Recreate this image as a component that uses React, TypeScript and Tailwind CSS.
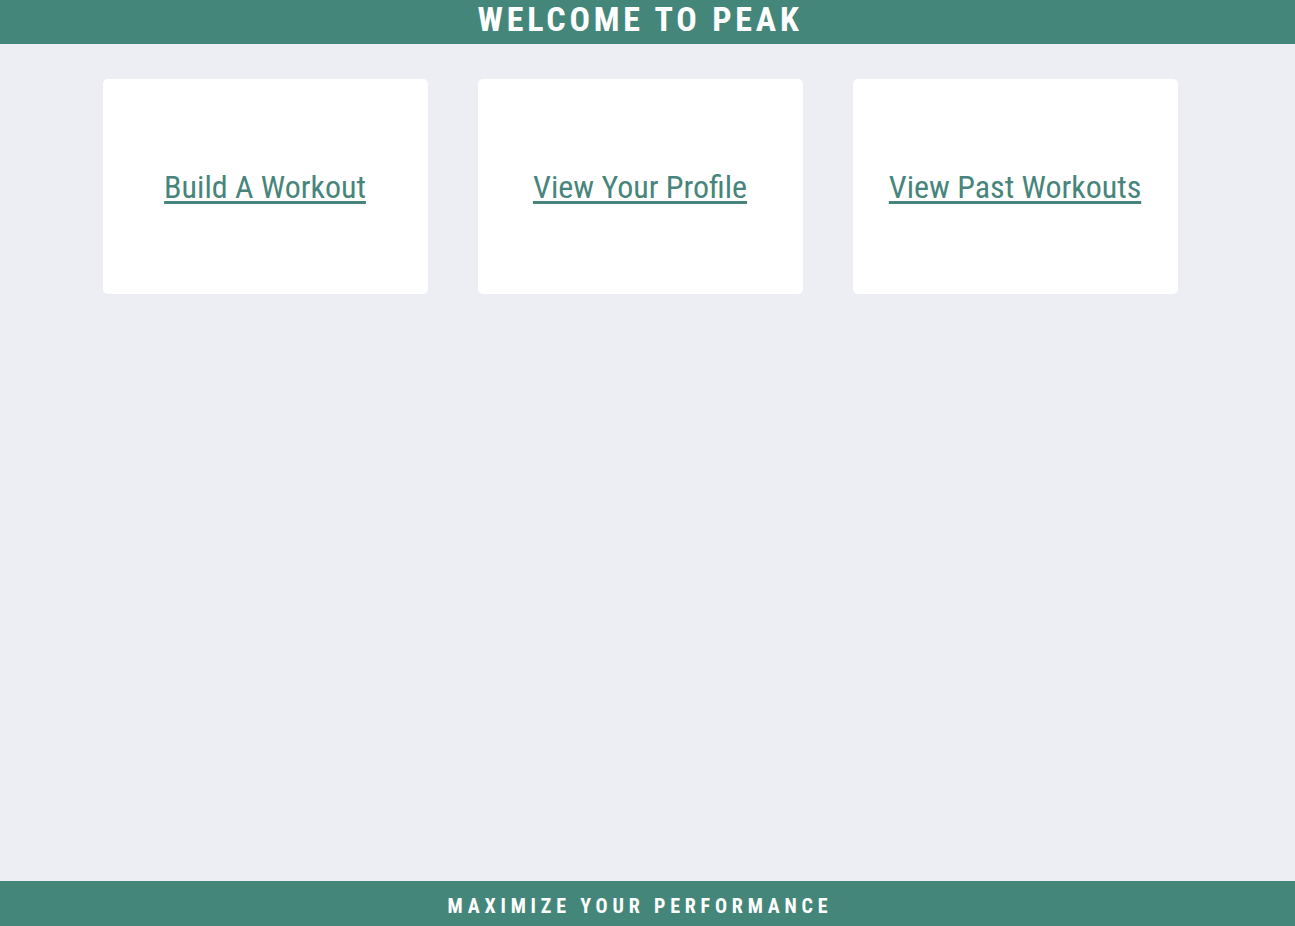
import React from "react";

const links = ["Build A Workout", "View Your Profile", "View Past Workouts"];

const font = { fontFamily: '"Roboto Condensed", Roboto, "Liberation Sans", sans-serif' };

export default function App() {
  return (
    <div
      className="flex min-h-screen flex-col bg-[#edeef3] [font-stretch:condensed]"
      style={font}
    >
      <header className="h-[44px] bg-[#44877a]">
        <div className="w-[1280px] text-center">
          <h1 className="text-[34px] font-bold uppercase leading-[38px] tracking-[3.8px] text-white">
            Welcome to Peak
          </h1>
        </div>
      </header>

      <main className="flex-1">
        <div className="w-[1280px] pt-[35px]">
          <div className="mx-auto grid w-[1075px] grid-cols-3 gap-[50px]">
            {links.map((label) => (
              <div
                key={label}
                className="flex h-[215px] items-center justify-center rounded-[5px] bg-white"
              >
                <a
                  href="#"
                  className="text-[32px] leading-none text-[#47857c] underline decoration-[3px] underline-offset-[3px]"
                >
                  {label}
                </a>
              </div>
            ))}
          </div>
        </div>
      </main>

      <footer className="h-[45px] bg-[#44877a]">
        <div className="w-[1280px] pt-[13px] text-center">
          <p className="text-[20px] font-bold uppercase leading-[24px] tracking-[4.8px] text-white">
            Maximize your performance
          </p>
        </div>
      </footer>
    </div>
  );
}
